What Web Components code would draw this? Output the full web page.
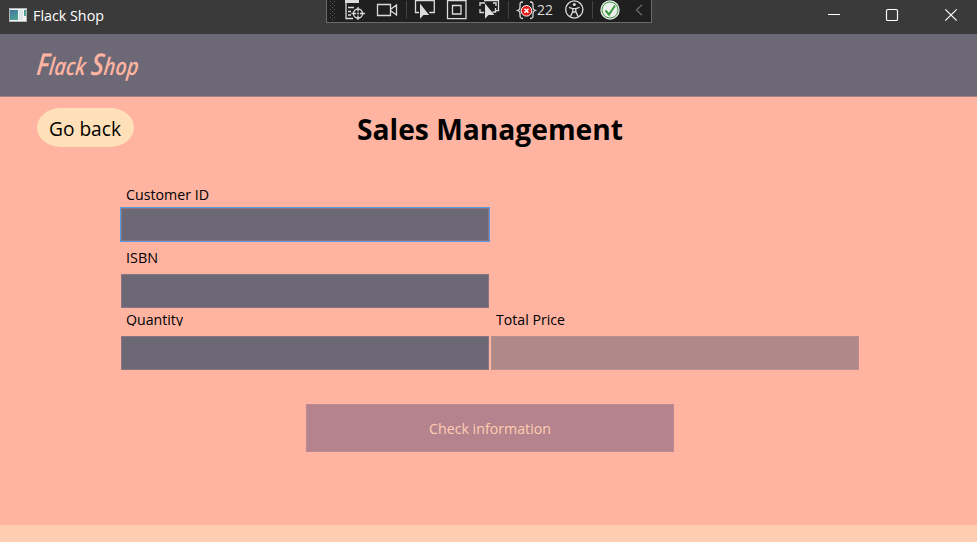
<!DOCTYPE html>
<html lang="en"><head><meta charset="utf-8"><title>Flack Shop</title>
<style>html,body{margin:0;height:100%;overflow:hidden}body{font-family:"Open Sans","Noto Sans",sans-serif;font-weight:400}</style></head>
<body><flack-app></flack-app>
<script>
const define=(name,html)=>customElements.define(name,class extends HTMLElement{
  connectedCallback(){
    if(this.shadowRoot)return;
    this.attachShadow({mode:'open'}).innerHTML=typeof html==='function'?html(this):html;
  }
});
/* A single line of text fitted to a given advance width. */
define('fit-text',el=>{
  const a=n=>el.getAttribute(n);
  const caps=a('caps');
  const text=caps?el.dataset.text.replace(/[A-Z]/g,c=>`<tspan font-size="${caps}">${c}</tspan>`):el.dataset.text;
  return `<style>:host{display:block;flex:none;width:${a('w')}px;height:${a('h')}px}
  svg{display:block;overflow:${el.hasAttribute('clip')?'hidden':'visible'}}</style>
  <svg width="${a('w')}" height="${a('h')}"><text x="0" y="${a('base')}" font-size="${a('size')}" fill="currentColor" textLength="${a('w')}" lengthAdjust="spacingAndGlyphs">${text}</text></svg>`;
});
define('debug-toolbar',`<style>:host{display:block;width:326px;height:23px;box-sizing:border-box;background:#1f1f1f;border:1px solid #6a6a6a;border-top:0;color:#e0e0e0}svg{display:block}</style>
<svg width="324" height="22" viewBox="327 0 324 22" fill="none" stroke="#dcdcdc" stroke-width="1.3">
<g stroke="#5c5c5c" stroke-width="1" stroke-dasharray="1 3"><path d="M330.5 1v20M334.5 1v20"/><path d="M332.5 3v18"/></g>
<path d="M345 0h14v3h-14z" fill="#dcdcdc" stroke="none"/><path d="M346 3v15.500h7M348 7.500h6M348 11.500h3M348 15h3"/>
<circle cx="358" cy="13.500" r="4.500"/><path d="M358 7v4.500M358 15.500v4.500M351.500 13.500h4.500M360 13.500h5"/><circle cx="358" cy="13.500" r="1" fill="#dcdcdc" stroke="none"/>
<path d="M377.500 4.500h13v11h-13zM391 9l5.500-4v10l-5.500-4"/>
<path d="M406.500 1v17M508.500 1v17M592.500 1v17" stroke="#444" stroke-width="1"/>
<path d="M419 12.500h-3.500V0M415.500.7h18.800v11.800h-5"/><path d="M420 3.500v15.200l3.500-3.800h5.600z" fill="#dcdcdc" stroke="none"/>
<path d="M447.500.7h18.500v18h-18.500zM452.500 5.500h8.500v8.500h-8.500z"/>
<path d="M484 .7h14.500v10h-3M480 6V3h5M480 9v3.500h4M493 3h3v3M495.500 8v4h-3"/><path d="M485 3.500v15.200l3.600-3.800h5.800z" fill="#dcdcdc" stroke="none"/>
<path d="M523 2c-3 0-3 1-3 4s0 3.500-2.500 4.500c2.500 1 2.500 1.500 2.500 4s0 4 3 4M530 2c3 0 3 1 3 4s0 3.500 2.500 4.500c-2.500 1-2.500 1.500-2.500 4s0 4-3 4"/>
<circle cx="526.500" cy="10.800" r="5.300" fill="#e51c17" stroke="#fff" stroke-width="1"/><path d="M524.500 8.800l4 4m0-4l-4 4" stroke="#fff" stroke-width="1.600"/>
<text x="537" y="15.200" fill="#dcdcdc" stroke="none" font-size="15" textLength="16" lengthAdjust="spacingAndGlyphs">22</text>
<circle cx="574.300" cy="9.500" r="8.600"/><circle cx="574.300" cy="4.600" r="1.500" fill="#dcdcdc" stroke="none"/><path d="M569 7.300l3.800 1.300v3l-2.300 5M579.600 7.300l-3.800 1.300v3l2.300 5M572.800 8.600h3M572.800 12h3"/>
<circle cx="610" cy="10" r="9.700" fill="#eee" stroke="none"/><circle cx="610" cy="10" r="8" stroke="#389b3f" stroke-width="1"/><path d="M605.500 10.500l3.500 4 6-9" stroke="#389b3f" stroke-width="2"/>
<path d="M642 4.800l-5.500 5.200 5.500 5.200" stroke="#696969"/></svg>`);
define('window-bar',`<style>:host{display:flex;height:34px;background:#3a3a3a;color:#fff;position:relative}
.app{margin:8px 6px 0 9px;flex:none}fit-text{margin-top:7px}debug-toolbar{position:absolute;left:326px;top:0}.controls{margin-left:auto;display:block}</style>
<svg class="app" width="18" height="15"><defs><linearGradient id="g" x1="0" y1="0" x2="1" y2="1"><stop stop-color="#3f76a5"/><stop offset="1" stop-color="#58b886"/></linearGradient></defs><path fill="#b2b8ba" d="M0 0h18v14H0z"/><path fill="#f3f5f5" d="M1 1h16v12H1z"/><path fill="url(#g)" d="M1 2h8v10H1zM15 2h2v6h-2z"/><path fill="#dde5e7" d="M10 2h4v10h-4z"/></svg>
<fit-text w="71" h="20" base="14" size="14.5" data-text="Flack Shop"></fit-text>
<svg class="controls" width="177" height="34" stroke="#fff" fill="none"><path d="M28 14.500h12"/><rect x="86.500" y="9.500" width="11" height="11" rx="1.300" stroke-width="1.200"/><path d="M145.300 9.300l11.400 11.400m0-11.400l-11.400 11.400" stroke-width="1.200"/></svg>
<debug-toolbar></debug-toolbar>`);
define('brand-header',`<style>:host{display:block;box-sizing:border-box;height:63px;background:#6d6875;color:#ffb4a2;padding:13px 0 0 37px;border-bottom:1px solid #a58086}
fit-text{font-family:"Mistral","Brush Script MT","Open Sans",cursive;font-style:italic;font-weight:600;transform:skewX(-6deg)}</style>
<fit-text w="102" h="34" base="28" size="24" caps="30" data-text="Flack Shop"></fit-text>`);
define('back-button',`<style>:host{display:block;box-sizing:border-box;width:97px;height:39px;border-radius:24px/19.5px;background:#ffe0b8;color:#000;padding:7px 12px}</style><fit-text w="72" h="28" base="21.300" size="19.8" data-text="Go back"></fit-text>`);
define('form-field',el=>`<style>:host{display:block;width:370px}fit-text{margin-left:6px}
.box{box-sizing:border-box;margin:var(--gap) 1px 0;height:34px;background:#6d6875;border:1px solid #88757f}
:host([focused]) .box{margin:var(--gap) 0 0;height:35px;border-color:#569de5;box-shadow:inset 0 0 0 1px #88757f}
:host([disabled]) .box{background:#ae8987;border-color:#b88f8d}</style>
<fit-text ${el.hasAttribute('clip')?'clip':''} w="${el.getAttribute('w')}" h="${el.getAttribute('h')}" base="14" size="14.6" data-text="${el.getAttribute('label')}"></fit-text><div class="box"></div>`);
define('check-button',`<style>:host{display:flex;justify-content:center;box-sizing:border-box;width:368px;height:48px;background:#b5838d;border:1px solid #bd8a91;color:#ffcdb2;padding-top:14px}</style><fit-text w="122" h="20" base="15" size="14.6" data-text="Check information"></fit-text>`);
define('sales-page',`<style>:host{display:block;box-sizing:border-box;flex:1;background:#ffb4a2;color:#000;padding-top:11px}
header{display:flex;height:75px;padding-left:37px}header>fit-text{margin:5px 0 0 223px;font-weight:700}
form{display:grid;grid-template-columns:370px 370px;grid-template-rows:66px 62px 84px;margin-left:120px;--gap:4px}
.second{--gap:11px}.third{--gap:10px}check-button{margin:9px 0 0 306px}</style>
<header><back-button></back-button><fit-text w="266" h="40" base="27" size="28.5" data-text="Sales Management"></fit-text></header>
<form><form-field focused label="Customer ID" w="83" h="17" style="grid-column:1/3;margin-top:3px"></form-field>
<form-field class="second" label="ISBN" w="32" h="14" style="grid-column:1/3"></form-field>
<form-field class="third" clip label="Quantity" w="57" h="15"></form-field>
<form-field class="third" disabled label="Total Price" w="69" h="15"></form-field></form>
<check-button></check-button>`);
define('flack-app',`<style>:host{display:flex;flex-direction:column;height:542px;width:977px}footer{height:17px;background:#ffcdb2}</style>
<window-bar></window-bar><brand-header></brand-header><sales-page></sales-page><footer></footer>`);
</script></body></html>
